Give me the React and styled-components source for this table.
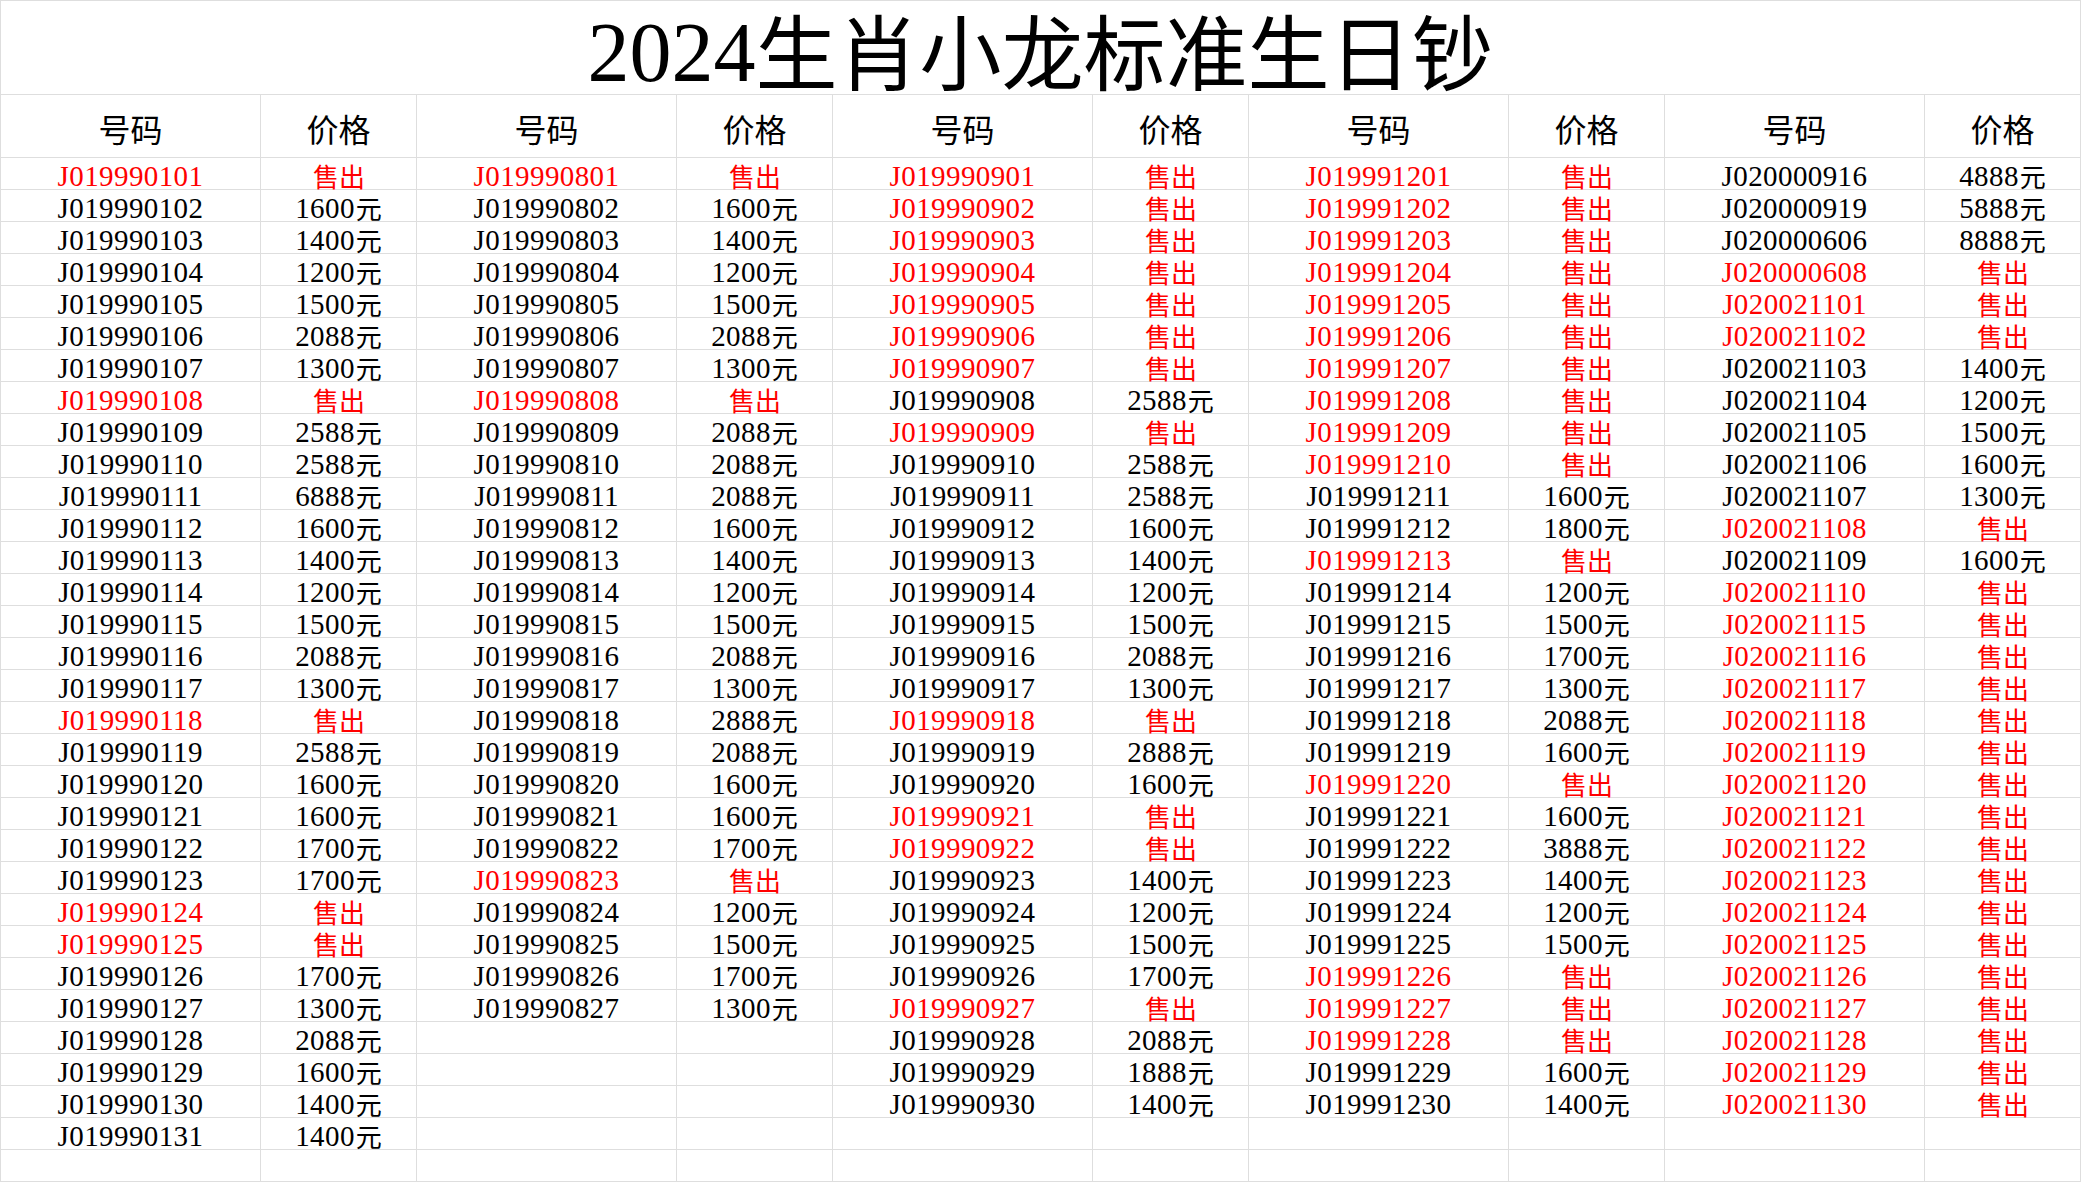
import React from 'react';
import styled, { createGlobalStyle } from 'styled-components';

const GlobalStyle = createGlobalStyle`
  html, body {
    margin: 0;
    padding: 0;
    background: #ffffff;
  }
  body {
    font-family: "Liberation Serif", "Noto Sans CJK SC", serif;
    color: #000;
  }
`;

const Sheet = styled.div`
  display: grid;
  grid-template-columns: repeat(5, 259px 155px);
  grid-template-rows: 93px 62px repeat(32, 31px);
  gap: 1px;
  background: #dedede;
  border: 1px solid #dedede;
  width: max-content;
`;

const TitleCell = styled.div`
  grid-column: 1 / -1;
  background: #fff;
  display: flex;
  align-items: flex-start;
  justify-content: center;
  padding-top: 6px;
  box-sizing: border-box;
  white-space: nowrap;
  line-height: 1;
`;

const TitleNum = styled.span`
  display: inline-block;
  font-family: "Liberation Serif", serif;
  font-size: 84px;
  line-height: 84px;
  padding-top: 4px;
`;

const TitleHan = styled.span`
  display: inline-block;
  font-family: "Noto Sans CJK SC", sans-serif;
  font-size: 82px;
  line-height: 84px;
  font-weight: 400;
`;

const HeadCell = styled.div`
  background: #fff;
  display: flex;
  align-items: center;
  justify-content: center;
  padding-top: 3px;
  box-sizing: border-box;
  font-family: "Noto Sans CJK SC", sans-serif;
  font-size: 32px;
  line-height: 1;
  font-weight: 400;
  white-space: nowrap;
`;

const Cell = styled.div`
  background: #fff;
  display: flex;
  align-items: center;
  justify-content: center;
  padding-top: 5px;
  box-sizing: border-box;
  white-space: nowrap;
  font-family: "Liberation Serif", "Noto Sans CJK SC", serif;
  font-size: 29px;
  letter-spacing: 0.4px;
  line-height: 1;
  color: ${(p) => (p.$sold ? '#ff0000' : '#000000')};
`;

const Han = styled.span`
  display: inline-block;
  font-family: "Noto Sans CJK SC", sans-serif;
  font-size: 26px;
  letter-spacing: 0;
  line-height: 26px;
  margin-left: 1px;
`;

const S = 'S';

const seq = (prefix, prices) =>
  prices.map((p, i) => ({ code: prefix + String(i + 1).padStart(2, '0'), price: p }));

const groups = [
  seq('J0199901', [S, 1600, 1400, 1200, 1500, 2088, 1300, S, 2588, 2588, 6888, 1600, 1400, 1200, 1500, 2088, 1300, S, 2588, 1600, 1600, 1700, 1700, S, S, 1700, 1300, 2088, 1600, 1400, 1400]),
  seq('J0199908', [S, 1600, 1400, 1200, 1500, 2088, 1300, S, 2088, 2088, 2088, 1600, 1400, 1200, 1500, 2088, 1300, 2888, 2088, 1600, 1600, 1700, S, 1200, 1500, 1700, 1300]),
  seq('J0199909', [S, S, S, S, S, S, S, 2588, S, 2588, 2588, 1600, 1400, 1200, 1500, 2088, 1300, S, 2888, 1600, S, S, 1400, 1200, 1500, 1700, S, 2088, 1888, 1400]),
  seq('J0199912', [S, S, S, S, S, S, S, S, S, S, 1600, 1800, S, 1200, 1500, 1700, 1300, 2088, 1600, S, 1600, 3888, 1400, 1200, 1500, S, S, S, 1600, 1400]),
  [
    ['J020000916', 4888], ['J020000919', 5888], ['J020000606', 8888], ['J020000608', S],
    ['J020021101', S], ['J020021102', S], ['J020021103', 1400], ['J020021104', 1200],
    ['J020021105', 1500], ['J020021106', 1600], ['J020021107', 1300], ['J020021108', S],
    ['J020021109', 1600], ['J020021110', S], ['J020021115', S], ['J020021116', S],
    ['J020021117', S], ['J020021118', S], ['J020021119', S], ['J020021120', S],
    ['J020021121', S], ['J020021122', S], ['J020021123', S], ['J020021124', S],
    ['J020021125', S], ['J020021126', S], ['J020021127', S], ['J020021128', S],
    ['J020021129', S], ['J020021130', S],
  ].map(([code, price]) => ({ code, price })),
];

const ROWS = 32;

export default function App() {
  const cells = [];
  for (let r = 0; r < ROWS; r++) {
    groups.forEach((g, gi) => {
      const item = g[r];
      if (!item) {
        cells.push(<Cell key={`c${r}-${gi}`} />);
        cells.push(<Cell key={`p${r}-${gi}`} />);
        return;
      }
      const sold = item.price === S;
      cells.push(
        <Cell key={`c${r}-${gi}`} $sold={sold}>
          {item.code}
        </Cell>
      );
      cells.push(
        <Cell key={`p${r}-${gi}`} $sold={sold}>
          {sold ? <Han>售出</Han> : (<>{item.price}<Han>元</Han></>)}
        </Cell>
      );
    });
  }

  return (
    <>
      <GlobalStyle />
      <Sheet>
        <TitleCell>
          <TitleNum>2024</TitleNum>
          <TitleHan>生肖小龙标准生日钞</TitleHan>
        </TitleCell>
        {groups.map((_, i) => (
          <React.Fragment key={`h${i}`}>
            <HeadCell>号码</HeadCell>
            <HeadCell>价格</HeadCell>
          </React.Fragment>
        ))}
        {cells}
      </Sheet>
    </>
  );
}
